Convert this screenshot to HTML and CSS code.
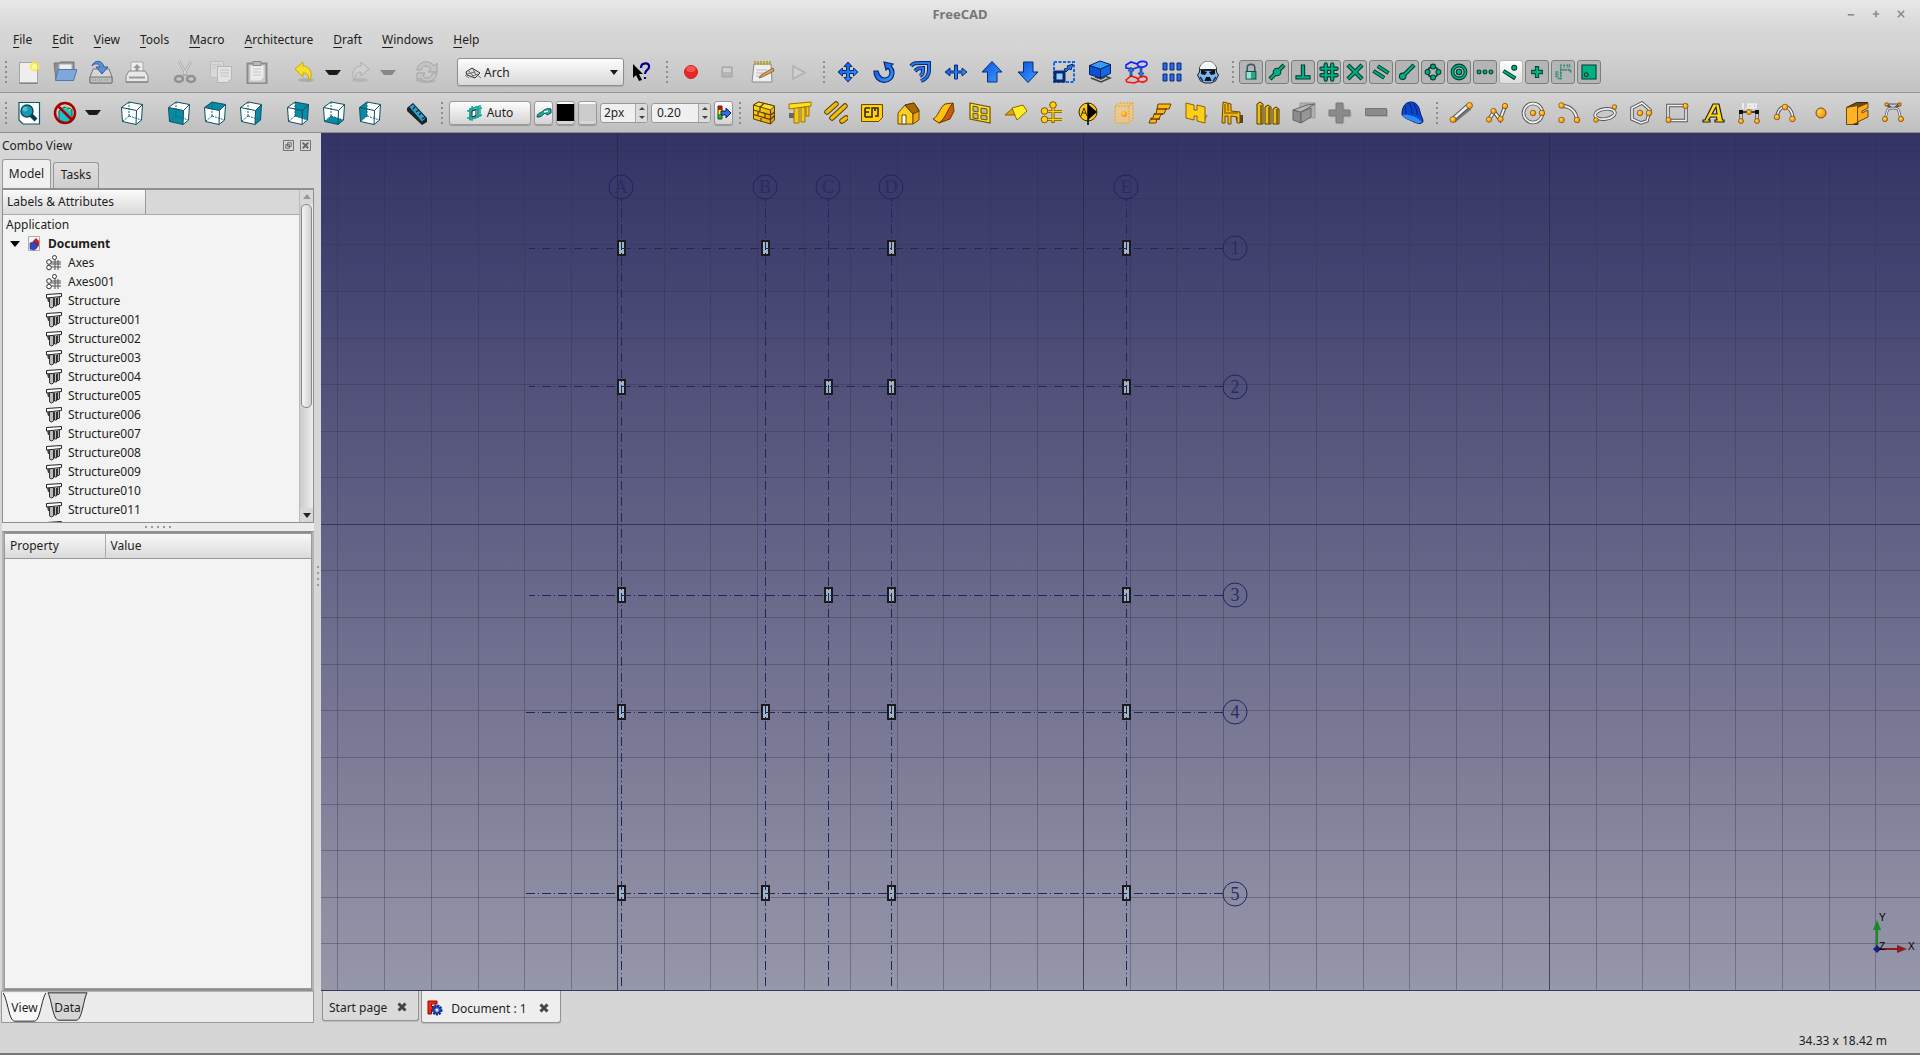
FILE: index.html
```html
<!DOCTYPE html>
<html lang="en">
<head>
<meta charset="utf-8">
<title>FreeCAD</title>
<link rel="stylesheet" href="styles.css">
</head>
<body>
<svg class="defs" aria-hidden="true">
  <defs>
    <linearGradient id="gBlue" x1="0" y1="0" x2="1" y2="1"><stop offset="0" stop-color="#0a50e0"/><stop offset="1" stop-color="#3aa0ff"/></linearGradient>
    <linearGradient id="gGold" x1="0" y1="0" x2="1" y2="1"><stop offset="0" stop-color="#ffe21c"/><stop offset="1" stop-color="#e89a08"/></linearGradient>
    <radialGradient id="gDot" cx=".35" cy=".35" r=".7"><stop offset="0" stop-color="#ffd75a"/><stop offset="1" stop-color="#f58a00"/></radialGradient>
    <linearGradient id="gSky" x1="0" y1="0" x2="0" y2="1"><stop offset="0" stop-color="#333366"/><stop offset="1" stop-color="#9797aa"/></linearGradient>
  </defs>

  <symbol id="new" viewBox="0 0 24 24"><path d="M2.500 2.500h18v20h-18z" fill="#eee" stroke="#a6a6a6"/><path d="M2 23.500h19" stroke="#888"/><circle cx="17.500" cy="6.500" r="5" fill="#f6ec3c" opacity=".75"/><circle cx="17.500" cy="6.500" r="2.500" fill="#fffa9a"/></symbol>
  <symbol id="open" viewBox="0 0 24 24"><path d="M1 3h5l1-1h14v8H6L3 20z" fill="#8f8f8f" stroke="#777"/><path d="M6 4h13v8H6z" fill="#eee" stroke="#aaa"/><path d="M5 9.500h19L20.500 20.500H2.500z" fill="#7ea7da" stroke="#4a78b4"/></symbol>
  <symbol id="save" viewBox="0 0 24 24"><path d="M4 9h16l3 8v6H1v-6z" fill="#d6d6d6" stroke="#777"/><path d="M1 17h22v6H1z" fill="#bdbdbd" stroke="#777"/><path d="M4 20h9M16 20h4" stroke="#888" stroke-dasharray="1 1"/><path d="M3 6C5 0 13-1 15 7h4l-6 7-6-7h4C10 3 6 3 3 6z" fill="#5b8fd0" stroke="#2f5f9f"/></symbol>
  <symbol id="print" viewBox="0 0 24 24"><path d="M6 2h12v10H6z" fill="#eee" stroke="#aaa"/><path d="M12 4l4 4h-2.500v4h-3V8H8z" fill="#999"/><path d="M4 11h16l3 5v6H1v-6z" fill="#e8e8e8" stroke="#888"/><path d="M4 17.500h16" stroke="#999" stroke-width="2"/><path d="M1 22h22" stroke="#777"/></symbol>
  <symbol id="cut" viewBox="0 0 24 24"><path d="M6 1l8 15M18 1l-8 15" stroke="#aaa" stroke-width="2.600" fill="none"/><path d="M6 1l7 13M18 1l-7 13" stroke="#ddd" fill="none"/><g fill="none" stroke="#909090" stroke-width="2.500"><ellipse cx="6" cy="19" rx="4" ry="3"/><ellipse cx="18" cy="19" rx="4" ry="3"/></g></symbol>
  <symbol id="copy" viewBox="0 0 24 24"><path d="M1.500 1.500h13v16h-13z" fill="#d8d8d8" stroke="#bdbdbd"/><path d="M8.500 6.500h14v12l-4 4h-10z" fill="#e2e2e2" stroke="#b5b5b5"/><path d="M3 5h9M3 8h4M11 10h9M11 13h9M11 16h9" stroke="#c2c2c2"/></symbol>
  <symbol id="paste" viewBox="0 0 24 24"><path d="M2.500 3.500h19v20h-19z" fill="#c9c9c9" stroke="#8c8c8c" stroke-width="2"/><path d="M5.500 5.500h13v12l-3 3h-10z" fill="#ebebeb"/><path d="M8 1.500h8v4H8z" fill="#bbb" stroke="#888"/><path d="M8 9h8M8 12h8M8 15h8" stroke="#c6c6c6"/></symbol>
  <symbol id="undo" viewBox="0 0 24 24"><ellipse cx="13" cy="20" rx="8" ry="2" fill="#888" opacity=".4"/><path d="M2 9l8-7v4c7 0 11 8 6 15 0-6-2-8-6-8v4z" fill="#f3df2c" stroke="#c9a800"/></symbol>
  <symbol id="redo" viewBox="0 0 24 24"><ellipse cx="12" cy="20" rx="8" ry="2" fill="#999" opacity=".35"/><path d="M21 9l-8-7v4C6 6 2 14 7 20c0-6 2-8 6-8v4z" fill="#cfcfcf" stroke="#adadad"/></symbol>
  <symbol id="refresh" viewBox="0 0 24 24"><ellipse cx="12" cy="21" rx="9" ry="2" fill="#999" opacity=".4"/><path d="M2 10c1-9 12-11 17-4l3-3v9h-9l3-3C12 4 7 6 6 10zM22 13c-1 9-12 11-17 5l-3 3v-8h8l-2 3c3 4 8 2 10-3z" fill="#c4c4c4" stroke="#a3a3a3"/></symbol>
  <symbol id="help" viewBox="0 0 24 24"><path d="M3 4v14l3-3 3 6 3-1-3-6h4z" fill="#000"/><path d="M11 8c0-6 9-6 8-1 0 3-4 3-4 7M15 17v2" fill="none" stroke="#00008b" stroke-width="2.200"/></symbol>
  <symbol id="rec" viewBox="0 0 24 24"><circle cx="12" cy="12" r="6.500" fill="#ea2525" stroke="#c22"/><ellipse cx="12" cy="9" rx="4.500" ry="3" fill="#ff7a7a" opacity=".6"/></symbol>
  <symbol id="stop" viewBox="0 0 24 24"><path d="M7 7h10v10H7z" fill="#b5b5b5" stroke="#a0a0a0"/><path d="M8 8h8v4H8z" fill="#d0d0d0"/></symbol>
  <symbol id="note" viewBox="0 0 24 24"><path d="M3 4h17l1 18H1z" fill="#eee" stroke="#888"/><path d="M3 3h17" stroke="#b5a642" stroke-width="4" stroke-dasharray="2 1"/><path d="M5 10h11M5 13h8M5 16h6" stroke="#bbb"/><path d="M22 8l1 3-12 6-3 1 2-3z" fill="#e0a040" stroke="#865"/></symbol>
  <symbol id="play" viewBox="0 0 24 24"><path d="M6 6v13l12-6.500z" fill="#d0d0d0" stroke="#b0b0b0" stroke-width="1.500"/></symbol>
  <symbol id="move" viewBox="0 0 24 24"><path d="M12 2l4 4.500h-2.500v4h4V8l4.500 4-4.500 4v-2.500h-4v4H16L12 22l-4-4.500h2.500v-4h-4V16L2 12l4.500-4v2.500h4v-4H8z" fill="url(#gBlue)" stroke="#0a2a70"/></symbol>
  <symbol id="rotate" viewBox="0 0 24 24"><path d="M2 11c0 15 20 15 20 1 0-3-1-4-3-6l2-2-9-2 2 8 2-2c3 3 3 9-3 10-4 0-6-3-7-7z" fill="url(#gBlue)" stroke="#0a2a70" stroke-width="1.200"/></symbol>
  <symbol id="offset" viewBox="0 0 24 24"><path d="M3 6C6 2 9 3 21 3v7c0 5-3 9-8 11M7 11c3-3 4-3 8-3v3c0 3-1 4-3 5" fill="none" stroke="#0a2a70" stroke-width="4"/><path d="M3 6C6 2 9 3 21 3v7c0 5-3 9-8 11M7 11c3-3 4-3 8-3v3c0 3-1 4-3 5" fill="none" stroke="#2a78ea" stroke-width="2"/></symbol>
  <symbol id="trim" viewBox="0 0 24 24"><path d="M1 12l5-4v3h4.500V5h3v6H18V8l5 4-5 4v-3h-4.500v6h-3v-6H6v3z" fill="url(#gBlue)" stroke="#0a2a70"/></symbol>
  <symbol id="up" viewBox="0 0 24 24"><path d="M12 1.500L22 12h-5v10H7.500V12H2z" fill="url(#gBlue)" stroke="#0a2a70"/></symbol>
  <symbol id="down" viewBox="0 0 24 24"><path d="M12 22.500L22 12h-5V2H7.500v10H2z" fill="url(#gBlue)" stroke="#0a2a70"/></symbol>
  <symbol id="scale" viewBox="0 0 24 24"><path d="M2 2h20v20H2z" fill="none" stroke="#1466e8" stroke-width="2" stroke-dasharray="3 1.500"/><path d="M3 12h9v9H3z" fill="#9cf" stroke="#0a2a70" stroke-width="3"/><path d="M12 9l4-1-1-2 6-2-2 6-2-1-3 3z" fill="#2a78ea" stroke="#0a2a70"/></symbol>
  <symbol id="draw" viewBox="0 0 24 24"><path d="M3 18l10 4 9-4-5-2M7 17l6 2 4-2" fill="none" stroke="#444" stroke-width="1.600"/><path d="M1.500 5.500v9l11 3.500v-9z" fill="#0a50d8" stroke="#06245c"/><path d="M12.500 9L22.500 4.500v9l-10 4.500z" fill="#1468e0" stroke="#06245c"/><path d="M1.500 5.500L12 1l10.500 3.500L12.500 9z" fill="#3a98ff" stroke="#06245c"/></symbol>
  <symbol id="shape2d" viewBox="0 0 24 24"><g fill="none" stroke-width="1.600"><path d="M2 5l5-3 6 2 2 3-6 2-7-1zM13 4c3-4 10-3 10 0s-6 4-8 2" stroke="#1020ff"/><path d="M2 20l5-4 6 2 2 3-5 2-7-1zM14 19c3-4 9-3 9 0s-6 4-8 2" stroke="#ff1010"/></g><path d="M7 7l3 4H8v5H6v-5H4zM17 17l-3-4h2V8h2v5h2z" fill="#2a78ea" stroke="#0a2a70" stroke-width=".6"/></symbol>
  <symbol id="array" viewBox="0 0 24 24"><g fill="#2a68e8" stroke="#0a2a70"><path d="M3 3h4v7H3zM10 3h4v7h-4zM17 3h4v7h-4zM3 14h4v7H3zM10 14h4v7h-4zM17 14h4v7h-4z"/></g></symbol>
  <symbol id="clone" viewBox="0 0 24 24"><path d="M3.500 12C2-2 22-2 20.500 12l2 3-3 6-4.500 2H9l-4.500-2-3-6z" fill="#7ab4f4" stroke="#222"/><path d="M4 9C4-1 20-1 20 9l-8 1z" fill="#f6f8fb"/><path d="M4 9h16l-1 2H5z" fill="#222"/><path d="M5 10l6 2-2 3-4-1zM19 10l-6 2 2 3 4-1zM10 17h4l1.500 4h-7z" fill="#111"/><path d="M4 17l3 4M20 17l-3 4" stroke="#234" stroke-width="1.500"/></symbol>

  <symbol id="lock" viewBox="0 0 24 24"><path d="M8.500 11V8c0-4 7-4 7 0v3" fill="none" stroke="#456" stroke-width="1.500"/><path d="M7.500 11.500h9v7h-9z" fill="#28a890" stroke="#115048"/><path d="M8 12h4v6H8z" fill="#9be0cc"/></symbol>
  <symbol id="s-mid" viewBox="0 0 24 24"><path d="M5.500 18.500l13-13" stroke="#003c30" stroke-width="4"/><circle cx="12" cy="12" r="3.500" fill="#00b184" stroke="#003c30"/><path d="M6 18L18 6" stroke="#00b184" stroke-width="2"/></symbol>
  <symbol id="s-perp" viewBox="0 0 24 24"><path d="M10.500 5.500h3v10h5v3h-13v-3h5z" fill="#00b184" stroke="#003c30"/></symbol>
  <symbol id="s-grid" viewBox="0 0 24 24"><path d="M9 5v14M15 5v14M5 9h14M5 15h14" stroke="#003c30" stroke-width="4" stroke-linecap="round"/><path d="M9 5v14M15 5v14M5 9h14M5 15h14" stroke="#00b184" stroke-width="2" stroke-linecap="round"/></symbol>
  <symbol id="s-int" viewBox="0 0 24 24"><path d="M5.500 5.500l13 13M18.500 5.500l-13 13" stroke="#003c30" stroke-width="4"/><path d="M6 6l12 12M18 6L6 18" stroke="#00b184" stroke-width="2"/></symbol>
  <symbol id="s-par" viewBox="0 0 24 24"><path d="M5 11l10 6.500M9 6.500L19 13" stroke="#003c30" stroke-width="3.600"/><path d="M5.500 11.300l9 5.900M9.500 6.800l9 5.900" stroke="#00b184" stroke-width="1.800"/></symbol>
  <symbol id="s-end" viewBox="0 0 24 24"><path d="M8 16L18.500 5.500" stroke="#003c30" stroke-width="4"/><circle cx="8" cy="16" r="3" fill="#00b184" stroke="#003c30"/><path d="M8 16L18 6" stroke="#00b184" stroke-width="2"/></symbol>
  <symbol id="s-ang" viewBox="0 0 24 24"><circle cx="12" cy="12" r="5" fill="none" stroke="#003c30" stroke-width="1.500"/><g fill="#00b184" stroke="#003c30"><circle cx="12" cy="7" r="2.300"/><circle cx="12" cy="17" r="2.300"/><circle cx="7" cy="12" r="2.300"/><circle cx="17" cy="12" r="2.300"/></g></symbol>
  <symbol id="s-cen" viewBox="0 0 24 24"><circle cx="12" cy="12" r="6" fill="none" stroke="#003c30" stroke-width="3.500"/><circle cx="12" cy="12" r="6" fill="none" stroke="#00b184" stroke-width="1.600"/><circle cx="12" cy="12" r="2.500" fill="#00b184" stroke="#003c30"/></symbol>
  <symbol id="s-ext" viewBox="0 0 24 24"><g fill="#00b184" stroke="#003c30"><circle cx="6.500" cy="12" r="1.800"/><circle cx="12" cy="12" r="1.800"/><circle cx="17.500" cy="12" r="1.800"/></g></symbol>
  <symbol id="s-near" viewBox="0 0 24 24"><path d="M5 11l11 7" stroke="#003c30" stroke-width="3.600"/><path d="M5.500 11.500l10 6" stroke="#00b184" stroke-width="1.800"/><circle cx="15" cy="8" r="2.300" fill="#00b184" stroke="#003c30"/></symbol>
  <symbol id="s-ort" viewBox="0 0 24 24"><path d="M10.500 7h3v3.500H17v3h-3.500V17h-3v-3.500H7v-3h3.500z" fill="#00b184" stroke="#004c3c"/></symbol>
  <symbol id="s-dim" viewBox="0 0 24 24"><path d="M10 19v-9h9v3M10 5v4M13 5v3M16 5v3M18 5v3M5 12h3M5 14h3M5 16h3M7 18h3" fill="none" stroke="#2c8a72" stroke-width="1.600" stroke-dasharray="2 .6"/></symbol>
  <symbol id="s-wp" viewBox="0 0 24 24"><path d="M5.500 5.500h13v13h-13z" fill="#00b184" stroke="#003c30"/><circle cx="9.500" cy="14.500" r="1.800" fill="none" stroke="#003c30"/></symbol>

  <symbol id="fit" viewBox="0 0 24 24"><path d="M2 1.500h20.500V23H6l-4-4z" fill="#fff" stroke="#0b5a6a" stroke-width="1.200"/><path d="M13 13l6 6" stroke="#0b3a4a" stroke-width="4"/><circle cx="10" cy="10" r="6" fill="#1a98b0" stroke="#0b4a5a" stroke-width="1.500"/><circle cx="8" cy="8" r="2.500" fill="#7ad4e4" opacity=".6"/></symbol>
  <symbol id="nodraw" viewBox="0 0 24 24"><path d="M6 10l5-4 8 2v10l-5 4-8-3z" fill="#20c0c8" stroke="#0b5a6a"/><path d="M12 8l7-6M15 10l7-5" stroke="#e8d820"/><circle cx="12" cy="12" r="10" fill="none" stroke="#a80000" stroke-width="2.500"/><path d="M5 5l14 14" stroke="#a80000" stroke-width="2.500"/></symbol>
  <symbol id="cube" viewBox="0 0 24 24"><path d="M1.500 6.500L9 1l13.500 2.500-1 15.500L16 23.500 2.500 20.500z" fill="#fff"/></symbol>
  <symbol id="wire" viewBox="0 0 24 24"><path d="M9 1v14M9 15l12.500 4M9 15l-6.500 5.500" fill="none" stroke="#0b6a7c" stroke-dasharray="2 1"/><path d="M1.500 6.500L9 1l13.500 2.500-1 15.500L16 23.500 2.500 20.500zM1.500 6.500l15 3 6-6M16.500 9.500L16 23.500" fill="none" stroke="#0b5060"/></symbol>
  <symbol id="c-front" viewBox="0 0 24 24"><path d="M1.500 6.500l15 3L16 23.500 2.500 20.500z" fill="#0a8aa4"/></symbol>
  <symbol id="c-top" viewBox="0 0 24 24"><path d="M1.500 6.500L9 1l13.500 2.500-6 6z" fill="#0a8aa4"/></symbol>
  <symbol id="c-right" viewBox="0 0 24 24"><path d="M16.500 9.500l6-6-1 15.500-5.500 4.500z" fill="#0a8aa4"/></symbol>
  <symbol id="c-rear" viewBox="0 0 24 24"><path d="M9 1l13.500 2.500-1 15.500L9 15z" fill="#0a8aa4"/></symbol>
  <symbol id="c-bottom" viewBox="0 0 24 24"><path d="M2.500 20.500L9 15l12.500 4-5.500 4.500z" fill="#0a8aa4"/></symbol>
  <symbol id="c-left" viewBox="0 0 24 24"><path d="M1.500 6.500L9 1v14l-6.500 5.500z" fill="#0a8aa4"/></symbol>
  <symbol id="measure" viewBox="0 0 24 24"><path d="M2 7l6-5 14 15v4l-5 3L2 10z" fill="#222"/><path d="M4 6l4-3 13 14-4 4z" fill="#2f9fcc" stroke="#0b3a4a"/><path d="M8 8l2-2M11 11l3-2M14 14l2-2M17 18l3-2" stroke="#06303c" stroke-width="1.300"/></symbol>
  <symbol id="plane" viewBox="0 0 16 16"><path d="M3 4l8-2.500V12l-8 2.500z" fill="#fff" stroke="#055" stroke-width="1.200"/><path d="M3 4l8-2.500V12l-8 2.500zM0 6l15-3M0 13l15-3M5 1v15M13 0v12" stroke="#18a8a0" fill="none" stroke-width="1.500"/><path d="M5 6l4-1.500v6L5 12z" fill="#fff" stroke="#022"/></symbol>
  <symbol id="constr" viewBox="0 0 16 16"><path d="M1 12c0-4 4-4 6-6s5-3 8-2v4l-4 2c-1 0-1-2-2-2s-3 4-6 4z" fill="#28a890" stroke="#055"/><path d="M8 7l4-1" stroke="#dff" stroke-width="1.500"/></symbol>
  <symbol id="apply" viewBox="0 0 16 16"><path d="M2 1h4v4H2z" fill="#f00"/><path d="M2 5h4v4H2z" fill="#ff0"/><path d="M2 9h4v5H2z" fill="#0c3"/><path d="M2 1h4v13H2z" fill="none" stroke="#333"/><path d="M5 6h5V3l5 5-5 5v-3H5z" fill="#2a70e8" stroke="#124"/></symbol>

  <symbol id="wall" viewBox="0 0 24 24"><path d="M1.500 4l5-3 16 4v14l-4 4-17-5z" fill="url(#gGold)" stroke="#5a3e00"/><path d="M1.500 4l17 5 4-4-16-4z" fill="#ffe030" stroke="#5a3e00"/><path d="M18.500 9v14M1.500 9l17 5 4-3M1.500 13.500l17 5 4-4M8 6v5M13 12v5M6 10v5M9 15.500v5M12 2.500L8 6" fill="none" stroke="#5a3e00" stroke-width="1.200"/></symbol>
  <symbol id="struct" viewBox="0 0 24 24"><path d="M1 12h6v5H1z" fill="#666"/><path d="M6 6h5v16H6zM13 6h4v15h-4zM18 5h3v10h-3z" fill="#f6c812" stroke="#9a7400"/><path d="M1 3l22-2v4L1 8z" fill="#ffe020" stroke="#9a7400"/></symbol>
  <symbol id="rebar" viewBox="0 0 24 24"><g stroke="#5a3e00" stroke-width="5.500" stroke-linecap="round"><path d="M3 11L12 3M8 17L21 5M18 20l4-3"/></g><g stroke="#eebc10" stroke-width="3.500" stroke-linecap="round"><path d="M3 11L12 3M8 17L21 5M18 20l4-3"/></g></symbol>
  <symbol id="floor" viewBox="0 0 24 24"><path d="M1.500 3.500h21v13l-4 4h-17z" fill="#ffcf10" stroke="#6a4a00"/><path d="M5 7h5M5 16h7V7h6v8h-3M5 7v9M5 11h4M15 7v3" fill="none" stroke="#3a2a00" stroke-width="1.600"/></symbol>
  <symbol id="house" viewBox="0 0 24 24"><path d="M2 12l7-8 8 9v10H2z" fill="#ffcf20" stroke="#6a4a00"/><path d="M9 4l9-2 5 7v10l-6 4V13z" fill="#f0a810" stroke="#6a4a00"/><path d="M9 4l9-2 5 8-6 3z" fill="#a86a08" stroke="#5a3e00"/><path d="M6 14h4v9H6z" fill="#fff" stroke="#6a4a00"/></symbol>
  <symbol id="roofA" viewBox="0 0 24 24"><path d="M1 18c5-2 7-12 12-15l8-1c-4 4-6 12-10 17l-4 3z" fill="#ffc010" stroke="#6a3a00"/><path d="M21 2l1 8-4 8-11 4c7-5 9-15 14-20z" fill="#c85a08" stroke="#6a3a00"/></symbol>
  <symbol id="window" viewBox="0 0 24 24"><path d="M2 2l20 4v16L2 18z" fill="#ffe030" stroke="#6a5200" stroke-width="1.200"/><path d="M5 5l5 1v5l-5-1zM13 7l6 1v5l-6-1zM5 12l5 1v5l-5-1zM13 14l6 1v4l-6-1z" fill="#b9b9a0" stroke="#6a5200"/></symbol>
  <symbol id="roof" viewBox="0 0 24 24"><path d="M1 14L9 7l5 2-3 5z" fill="#e0a010" stroke="#8a6200"/><path d="M8 7l11-3 4 6-10 9z" fill="#ffee28" stroke="#8a6a00"/></symbol>
  <symbol id="axis" viewBox="0 0 24 24"><path d="M13 5v17M8 10.500h14M8 18.500h14" stroke="#7a5600" stroke-width="3"/><g fill="#ffd010" stroke="#7a5600"><circle cx="13" cy="4" r="3.300"/><circle cx="4.500" cy="10" r="3.300"/><circle cx="4.500" cy="18.500" r="3.300"/></g><path d="M13 7v14M8 10.500h14M8 18.500h14" stroke="#ffd010" stroke-width="1.400"/></symbol>
  <symbol id="section" viewBox="0 0 24 24"><circle cx="12" cy="11" r="9" fill="#ffc810" stroke="#3a2a00"/><path d="M12 2v22" stroke="#000" stroke-width="1.500"/><path d="M12 3l9 8-9 8z" fill="#000"/><path d="M5 15l3-8 3 8M6 12h4" stroke="#3a2a00" fill="none"/></symbol>
  <symbol id="space" viewBox="0 0 24 24"><path d="M3 5l4-3h14v16l-4 4H3z" fill="#f6c878" fill-opacity=".65" stroke="#f0a020" stroke-dasharray="2 1"/><path d="M3 5h14v17M17 5l4-3" fill="none" stroke="#f0a020" stroke-dasharray="2 1"/><circle cx="12" cy="13" r="3" fill="url(#gDot)"/></symbol>
  <symbol id="stairs" viewBox="0 0 24 24"><path d="M10 3h13l-2 5h-3l-2 5h-3l-2 5H9l-1 4H1l2-5h2l1-4h2l1-5z" fill="#ffb810" stroke="#6a4000"/><path d="M9 8h10M6 13h9M3 18h9" stroke="#6a4000" stroke-width="1.500"/></symbol>
  <symbol id="panel" viewBox="0 0 24 24"><path d="M18 14h6l-4 7h-3z" fill="#777" opacity=".7"/><path d="M2 2l8 2v5h3V4l8 2v16l-8-2v-5h-3v4l-8-2z" fill="#ffcf18" stroke="#8a6200"/></symbol>
  <symbol id="chair" viewBox="0 0 24 24"><path d="M15 14h8v8h-6z" fill="#444"/><path d="M3 1l8 2v7l9 1v11h-3v-6l-6-1v8H8v-8H5v7H2z" fill="#f4b810" stroke="#6a4a00"/><path d="M5 3v8M8 3v7M4 12h14" stroke="#6a4a00"/></symbol>
  <symbol id="fence" viewBox="0 0 24 24"><g fill="#f0c010" stroke="#4a3600"><path d="M1 3l3-2 3 2v20H1zM9 6l3-2 3 2v17H9zM17 8l3-2 3 2v15h-6z"/></g><path d="M5 4v19M13 6v17M21 8v15" stroke="#8a6a00" stroke-width="2"/></symbol>
  <symbol id="gbox" viewBox="0 0 24 24"><path d="M8 2h15v15H8z" fill="#b0b0b0" stroke="#999"/><path d="M1 9l8 2v11l-8-3z" fill="#8c8c8c" stroke="#666"/><path d="M1 9l14-5 8-1-14 8z" fill="#b8b8b8" stroke="#666"/><path d="M9 11l10-4v9L9 22z" fill="#969696" stroke="#666"/></symbol>
  <symbol id="plus" viewBox="0 0 24 24"><path d="M10 4h7v7h7v6h-7v7h-7v-7H3v-6h7z" fill="#bbb" opacity=".8"/><path d="M8 2h7v7h7v6h-7v7H8v-7H1V9h7z" fill="#8b8b8b" stroke="#777"/></symbol>
  <symbol id="minus" viewBox="0 0 24 24"><path d="M3 9h21v7H3z" fill="#aaa"/><path d="M1.500 7.500h21v7h-21z" fill="#8b8b8b" stroke="#777"/></symbol>
  <symbol id="helmet" viewBox="0 0 24 24"><path d="M2 13C2 5 6 1 11 1s8 4 9 10c1 4 3 7 3 9 0 3-5 3-9 1S1 16 2 13z" fill="#0a46d0" stroke="#061e5c"/><path d="M2 14c6-1 15 1 20 7-2 2-6 1-10-1s-9-3-10-6z" fill="#2f8af4"/><path d="M5 5c1 3 1 5 1 8M9 2c2 3 3 7 3 11M14 3c2 3 3 7 3 11" stroke="#05206c" fill="none"/></symbol>

  <symbol id="line" viewBox="0 0 24 24"><path d="M5 20L21 7" stroke="#777" stroke-width="4"/><path d="M4 18L20 4" stroke="#555" stroke-width="4.500"/><path d="M4 18L20 4" stroke="#f2f2f2" stroke-width="2.500"/><circle cx="4" cy="18.500" r="3" fill="url(#gDot)" stroke="#7a4400" stroke-width=".7"/><circle cx="20.500" cy="4.500" r="3" fill="url(#gDot)" stroke="#7a4400" stroke-width=".7"/></symbol>
  <symbol id="poly" viewBox="0 0 24 24"><path d="M4 18.500l5-8 6 8 5-13" stroke="#555" stroke-width="4" fill="none"/><path d="M4 18.500l5-8 6 8 5-13" stroke="#f2f2f2" stroke-width="2" fill="none"/><g fill="url(#gDot)" stroke="#7a4400" stroke-width=".7"><circle cx="4" cy="18.500" r="2.700"/><circle cx="8.500" cy="10" r="2.700"/><circle cx="15.500" cy="18" r="2.700"/><circle cx="20" cy="5" r="2.700"/></g></symbol>
  <symbol id="circle" viewBox="0 0 24 24"><circle cx="12" cy="12" r="9.500" fill="none" stroke="#555" stroke-width="3.500"/><circle cx="12" cy="12" r="9.500" fill="none" stroke="#f2f2f2" stroke-width="1.800"/><g fill="url(#gDot)" stroke="#7a4400" stroke-width=".7"><circle cx="12" cy="12" r="2.800"/><circle cx="21" cy="12" r="2.800"/></g></symbol>
  <symbol id="arc" viewBox="0 0 24 24"><path d="M5 5c8 0 14 5 15 14" stroke="#555" stroke-width="4" fill="none"/><path d="M5 5c8 0 14 5 15 14" stroke="#f2f2f2" stroke-width="2" fill="none"/><g fill="url(#gDot)" stroke="#7a4400" stroke-width=".7"><circle cx="4.500" cy="4.500" r="2.800"/><circle cx="20" cy="19" r="2.800"/><circle cx="4.500" cy="19" r="2.800"/></g></symbol>
  <symbol id="ellipse" viewBox="0 0 24 24"><g fill="none"><ellipse cx="12" cy="13" rx="10" ry="5" stroke="#555" stroke-width="3.500" transform="rotate(-8 12 13)"/><ellipse cx="12" cy="13" rx="10" ry="5" stroke="#f2f2f2" stroke-width="1.800" transform="rotate(-8 12 13)"/></g><g fill="url(#gDot)" stroke="#7a4400" stroke-width=".7"><circle cx="3" cy="19" r="2.300"/><circle cx="21.500" cy="6" r="2.300"/></g></symbol>
  <symbol id="pent" viewBox="0 0 24 24"><path d="M3 7l10-5 8 7-3 11-6 2-9-4z" stroke="#555" stroke-width="3.500" fill="none"/><path d="M3 7l10-5 8 7-3 11-6 2-9-4z" stroke="#f2f2f2" stroke-width="1.600" fill="none"/><g fill="url(#gDot)" stroke="#7a4400" stroke-width=".7"><circle cx="11" cy="12" r="2.800"/><circle cx="20" cy="12" r="2.800"/></g></symbol>
  <symbol id="rect" viewBox="0 0 24 24"><path d="M3 4.500h18v15H3z" stroke="#555" stroke-width="3.500" fill="none"/><path d="M3 4.500h18v15H3z" stroke="#f2f2f2" stroke-width="1.600" fill="none"/><g fill="url(#gDot)" stroke="#7a4400" stroke-width=".7"><circle cx="3.500" cy="19" r="2.600"/><circle cx="20.500" cy="5" r="2.600"/></g></symbol>
  <symbol id="textA" viewBox="0 0 24 24"><path d="M2 21h7v-2H7.500l2-3h6l.5 3h-2v2h9v-2h-1.500L18 3h-6L4 19H2zM11 13l4-7 1 7z" fill="#ffd818" stroke="#222" stroke-width="1.200" fill-rule="evenodd"/></symbol>
  <symbol id="dim" viewBox="0 0 24 24"><path d="M4 20V11M20 20V11" stroke="#555" stroke-width="3.500"/><path d="M4 20V11M20 20V11" stroke="#f2f2f2" stroke-width="1.500"/><path d="M4 11h16" stroke="#111" stroke-width="1.500"/><path d="M2 9h4v4H2zM18 9h4v4h-4z" fill="#111"/><path d="M6 2v6M9 7v1M11 3h3v4h-3zM16 3h3v4h-3z" fill="none" stroke="#fff" stroke-width="1.200"/><g fill="url(#gDot)" stroke="#7a4400" stroke-width=".7"><circle cx="4" cy="20" r="2.500"/><circle cx="20" cy="20" r="2.500"/><circle cx="12" cy="11" r="2.500"/></g></symbol>
  <symbol id="bspl" viewBox="0 0 24 24"><path d="M4 17C4 3 19 1 20 18" stroke="#555" stroke-width="3.500" fill="none"/><path d="M4 17C4 3 19 1 20 18" stroke="#f2f2f2" stroke-width="1.600" fill="none"/><g fill="url(#gDot)" stroke="#7a4400" stroke-width=".7"><circle cx="4" cy="16" r="2.800"/><circle cx="12" cy="6" r="2.800"/><circle cx="19.500" cy="18" r="2.800"/></g></symbol>
  <symbol id="point" viewBox="0 0 24 24"><circle cx="12" cy="12" r="5" fill="url(#gDot)" stroke="#8a4a00"/></symbol>
  <symbol id="facE" viewBox="0 0 24 24"><path d="M1.500 6.500l10-5h11.500l-10 5v17H1.500z" fill="#6a4a10" stroke="#3c2a08"/><path d="M1.500 6.500l11-2v17l-5 2h-6z" fill="#ffb428" stroke="#6a4a10"/><path d="M12.500 6.500L23 2v5l-6 3v2l6-3v7l-10.500 5z" fill="#ffa818" stroke="#6a4a10"/></symbol>
  <symbol id="bez" viewBox="0 0 24 24"><path d="M5 3h14" stroke="#555"/><path d="M4 18C7 9 5 7 12 7s5 2 8 11M5 3l6 5M19 3l-6 5" stroke="#555" stroke-width="2.600" fill="none"/><path d="M4 18C7 9 5 7 12 7s5 2 8 11" stroke="#f2f2f2" stroke-width="1.200" fill="none"/><g fill="url(#gDot)" stroke="#7a4400" stroke-width=".7"><circle cx="4" cy="18" r="2.600"/><circle cx="20" cy="18" r="2.600"/><path d="M4 2h3v3H4zM17 2h3v3h-3z"/></g></symbol>

  <symbol id="doc" viewBox="0 0 14 16"><path d="M1.500 .5h11v14h-11z" fill="#f4f4f4" stroke="#aaa"/><path d="M6 5l3-3 3 3v5l-4 2z" fill="#d02020"/><path d="M3 7l3-1 4 1v5l-3 2-4-1z" fill="#3048c0" stroke="#182878" stroke-width=".6"/></symbol>
  <symbol id="t-axes" viewBox="0 0 16 16"><path d="M9 4v11M12 5v10M5 7h10M5 12h10M5 9h10" stroke="#555"/><g fill="#fff" stroke="#333"><circle cx="8.500" cy="2.500" r="2"/><circle cx="3" cy="7" r="2.300"/><circle cx="3" cy="12.500" r="2.300"/></g></symbol>
  <symbol id="t-str" viewBox="0 0 16 16"><path d="M3.500 5v9l2 1 2-1V5M8.500 5v8h2V5M11.500 4.500V12l2-1V4" fill="#bbb" stroke="#333"/><path d="M.5 1.500l15-1v3l-15 1.500z" fill="#fff" stroke="#222"/><path d="M1 5h2v4H2z" fill="#444"/></symbol>
  <symbol id="fc" viewBox="0 0 16 16"><path d="M1 1h9v3H4.500v2.500H8v3H4.500V14H1z" fill="#f02c10" stroke="#900"/><circle cx="10" cy="10" r="4.500" fill="#5a8ae0" stroke="#0a2a8a" stroke-width="2" stroke-dasharray="2 1"/><circle cx="10" cy="10" r="3.300" fill="#3a6ad8" stroke="#0a2a8a"/><circle cx="10" cy="10" r="1.500" fill="#eee"/></symbol>
  <symbol id="x" viewBox="0 0 10 10"><path d="M1.500 1.500l7 7M8.500 1.500l-7 7" stroke="currentColor" stroke-width="3"/></symbol>
</svg>

<header class="chrome">
  <div class="titlebar">
    <h1>FreeCAD</h1>
    <div class="wm">
      <button aria-label="Minimize"><svg viewBox="0 0 10 10"><path d="M1 6h8"/></svg></button>
      <button aria-label="Maximize"><svg viewBox="0 0 10 10"><path d="M1 5h8M5 1v8"/></svg></button>
      <button aria-label="Close"><svg viewBox="0 0 10 10"><path d="M1 1l8 8M9 1L1 9"/></svg></button>
    </div>
  </div>
  <nav class="menubar">
    <button><u>F</u>ile</button><button><u>E</u>dit</button><button><u>V</u>iew</button><button><u>T</u>ools</button><button><u>M</u>acro</button><button><u>A</u>rchitecture</button><button><u>D</u>raft</button><button><u>W</u>indows</button><button><u>H</u>elp</button>
  </nav>
  <div class="toolbar">
    <i class="grip"></i>
    <button class="tb" aria-label="New"><svg><use href="#new"/></svg></button>
    <button class="tb" aria-label="Open"><svg><use href="#open"/></svg></button>
    <button class="tb" aria-label="Save"><svg><use href="#save"/></svg></button>
    <button class="tb" aria-label="Print"><svg><use href="#print"/></svg></button>
    <i class="sep"></i>
    <button class="tb" aria-label="Cut"><svg><use href="#cut"/></svg></button>
    <button class="tb" aria-label="Copy"><svg><use href="#copy"/></svg></button>
    <button class="tb" aria-label="Paste"><svg><use href="#paste"/></svg></button>
    <i class="sep"></i>
    <button class="tb" aria-label="Undo"><svg><use href="#undo"/></svg></button>
    <button class="drop" aria-label="Undo list"></button>
    <button class="tb" aria-label="Redo"><svg><use href="#redo"/></svg></button>
    <button class="drop off" aria-label="Redo list"></button>
    <i class="sep"></i>
    <button class="tb" aria-label="Refresh"><svg><use href="#refresh"/></svg></button>
    <i class="sep"></i>
    <div class="combo">
      <svg class="combo-icon" viewBox="0 0 16 16"><path d="M1 7l6-4 8 5-5 5-8-3z" fill="#ddd" stroke="#333"/><path d="M4 6l4 5M8 4l3 6M2 9l8-2M5 12l8-3M0 10l4 3M12 10l4 3" stroke="#555" stroke-width=".8"/></svg>
      <select aria-label="Workbench"><option>Arch</option></select>
    </div>
    <button class="tb" aria-label="What's This?"><svg><use href="#help"/></svg></button>
    <i class="grip"></i>
    <button class="tb" aria-label="Record macro"><svg><use href="#rec"/></svg></button>
    <button class="tb" aria-label="Stop macro"><svg><use href="#stop"/></svg></button>
    <button class="tb" aria-label="Macros"><svg><use href="#note"/></svg></button>
    <button class="tb" aria-label="Run macro"><svg><use href="#play"/></svg></button>
    <i class="grip"></i>
    <button class="tb" aria-label="Move"><svg><use href="#move"/></svg></button>
    <button class="tb" aria-label="Rotate"><svg><use href="#rotate"/></svg></button>
    <button class="tb" aria-label="Offset"><svg><use href="#offset"/></svg></button>
    <button class="tb" aria-label="Trimex"><svg><use href="#trim"/></svg></button>
    <button class="tb" aria-label="Upgrade"><svg><use href="#up"/></svg></button>
    <button class="tb" aria-label="Downgrade"><svg><use href="#down"/></svg></button>
    <button class="tb" aria-label="Scale"><svg><use href="#scale"/></svg></button>
    <button class="tb" aria-label="Drawing"><svg><use href="#draw"/></svg></button>
    <button class="tb" aria-label="Shape 2D view"><svg><use href="#shape2d"/></svg></button>
    <button class="tb" aria-label="Array"><svg><use href="#array"/></svg></button>
    <button class="tb" aria-label="Clone"><svg><use href="#clone"/></svg></button>
    <i class="grip"></i>
    <div class="snaps">
      <button aria-label="Snap lock"><svg><use href="#lock"/></svg></button>
      <button aria-label="Midpoint"><svg><use href="#s-mid"/></svg></button>
      <button aria-label="Perpendicular"><svg><use href="#s-perp"/></svg></button>
      <button aria-label="Grid"><svg><use href="#s-grid"/></svg></button>
      <button aria-label="Intersection"><svg><use href="#s-int"/></svg></button>
      <button aria-label="Parallel"><svg><use href="#s-par"/></svg></button>
      <button aria-label="Endpoint"><svg><use href="#s-end"/></svg></button>
      <button aria-label="Angle"><svg><use href="#s-ang"/></svg></button>
      <button aria-label="Center"><svg><use href="#s-cen"/></svg></button>
      <button aria-label="Extension"><svg><use href="#s-ext"/></svg></button>
      <button class="raised" aria-label="Near"><svg><use href="#s-near"/></svg></button>
      <button aria-label="Ortho"><svg><use href="#s-ort"/></svg></button>
      <button aria-label="Dimensions"><svg><use href="#s-dim"/></svg></button>
      <button aria-label="Working plane"><svg><use href="#s-wp"/></svg></button>
    </div>
  </div>
</header>
<div class="toolbar second">
  <i class="grip"></i>
  <button class="tb" aria-label="Fit all"><svg><use href="#fit"/></svg></button>
  <button class="tb" aria-label="Draw style"><svg><use href="#nodraw"/></svg></button>
  <button class="drop" aria-label="Draw style list"></button>
  <i class="sep"></i>
  <button class="tb" aria-label="Axonometric"><svg><use href="#cube"/><use href="#wire"/></svg></button>
  <i class="sep"></i>
  <button class="tb" aria-label="Front"><svg><use href="#cube"/><use href="#c-front"/><use href="#wire"/></svg></button>
  <button class="tb" aria-label="Top"><svg><use href="#cube"/><use href="#c-top"/><use href="#wire"/></svg></button>
  <button class="tb" aria-label="Right"><svg><use href="#cube"/><use href="#c-right"/><use href="#wire"/></svg></button>
  <i class="sep"></i>
  <button class="tb" aria-label="Rear"><svg><use href="#cube"/><use href="#c-rear"/><use href="#wire"/></svg></button>
  <button class="tb" aria-label="Bottom"><svg><use href="#cube"/><use href="#c-bottom"/><use href="#wire"/></svg></button>
  <button class="tb" aria-label="Left"><svg><use href="#cube"/><use href="#c-left"/><use href="#wire"/></svg></button>
  <i class="sep"></i>
  <button class="tb" aria-label="Measure"><svg><use href="#measure"/></svg></button>
  <i class="grip"></i>
  <div class="tray">
    <button class="push auto"><svg><use href="#plane"/></svg>Auto</button>
    <button class="push sq" aria-label="Construction mode"><svg><use href="#constr"/></svg></button>
    <button class="push sq" aria-label="Line color"><b class="swatch black"></b></button>
    <button class="push sq" aria-label="Face color"><b class="swatch"></b></button>
    <div class="spin small"><input type="text" value="2px" aria-label="Line width"><span><button aria-label="Up"></button><button class="dn" aria-label="Down"></button></span></div>
    <div class="spin"><input type="text" value="0.20" aria-label="Text size"><span><button aria-label="Up"></button><button class="dn" aria-label="Down"></button></span></div>
    <button class="push sq" aria-label="Apply style"><svg><use href="#apply"/></svg></button>
  </div>
  <i class="grip"></i>
  <button class="tb" aria-label="Wall"><svg><use href="#wall"/></svg></button>
  <button class="tb" aria-label="Structure"><svg><use href="#struct"/></svg></button>
  <button class="tb" aria-label="Rebar"><svg><use href="#rebar"/></svg></button>
  <button class="tb" aria-label="Floor"><svg><use href="#floor"/></svg></button>
  <button class="tb" aria-label="Building"><svg><use href="#house"/></svg></button>
  <button class="tb" aria-label="Site"><svg><use href="#roofA"/></svg></button>
  <button class="tb" aria-label="Window"><svg><use href="#window"/></svg></button>
  <button class="tb" aria-label="Roof"><svg><use href="#roof"/></svg></button>
  <button class="tb" aria-label="Axis"><svg><use href="#axis"/></svg></button>
  <button class="tb" aria-label="Section plane"><svg><use href="#section"/></svg></button>
  <button class="tb" aria-label="Space"><svg><use href="#space"/></svg></button>
  <button class="tb" aria-label="Stairs"><svg><use href="#stairs"/></svg></button>
  <button class="tb" aria-label="Panel"><svg><use href="#panel"/></svg></button>
  <button class="tb" aria-label="Equipment"><svg><use href="#chair"/></svg></button>
  <button class="tb" aria-label="Frame"><svg><use href="#fence"/></svg></button>
  <button class="tb" aria-label="Cut plane"><svg><use href="#gbox"/></svg></button>
  <button class="tb" aria-label="Add"><svg><use href="#plus"/></svg></button>
  <button class="tb" aria-label="Remove"><svg><use href="#minus"/></svg></button>
  <button class="tb" aria-label="Survey"><svg><use href="#helmet"/></svg></button>
  <i class="grip"></i>
  <button class="tb" aria-label="Line"><svg><use href="#line"/></svg></button>
  <button class="tb" aria-label="Wire"><svg><use href="#poly"/></svg></button>
  <button class="tb" aria-label="Circle"><svg><use href="#circle"/></svg></button>
  <button class="tb" aria-label="Arc"><svg><use href="#arc"/></svg></button>
  <button class="tb" aria-label="Ellipse"><svg><use href="#ellipse"/></svg></button>
  <button class="tb" aria-label="Polygon"><svg><use href="#pent"/></svg></button>
  <button class="tb" aria-label="Rectangle"><svg><use href="#rect"/></svg></button>
  <button class="tb" aria-label="Text"><svg><use href="#textA"/></svg></button>
  <button class="tb" aria-label="Dimension"><svg><use href="#dim"/></svg></button>
  <button class="tb" aria-label="B-spline"><svg><use href="#bspl"/></svg></button>
  <button class="tb" aria-label="Point"><svg><use href="#point"/></svg></button>
  <button class="tb" aria-label="Facebinder"><svg><use href="#facE"/></svg></button>
  <button class="tb" aria-label="Bezier"><svg><use href="#bez"/></svg></button>
</div>

<main class="work">
  <aside class="dock">
    <div class="dock-title"><span>Combo View</span>
      <button aria-label="Float"><svg viewBox="0 0 12 12"><path d="M.5.5h11v11H.5zM5 3h4v4H5zM3 5h4v4H3z"/></svg></button>
      <button aria-label="Close"><svg viewBox="0 0 12 12"><path d="M.5.5h11v11H.5z"/><path d="M3 3l6 6M9 3L3 9" stroke-width="2"/></svg></button>
    </div>
    <div class="tabs"><button class="on">Model</button><button>Tasks</button></div>
    <section class="tree">
      <div class="tree-main">
        <div class="tree-head">Labels &amp; Attributes</div>
        <ul>
          <li class="root">Application</li>
          <li class="document"><svg class="caret" viewBox="0 0 10 6"><path d="M0 0h10L5 6z"/></svg><svg class="docicon"><use href="#doc"/></svg>Document</li>
          <li><svg><use href="#t-axes"/></svg>Axes</li>
          <li><svg><use href="#t-axes"/></svg>Axes001</li>
          <li><svg><use href="#t-str"/></svg>Structure</li>
          <li><svg><use href="#t-str"/></svg>Structure001</li>
          <li><svg><use href="#t-str"/></svg>Structure002</li>
          <li><svg><use href="#t-str"/></svg>Structure003</li>
          <li><svg><use href="#t-str"/></svg>Structure004</li>
          <li><svg><use href="#t-str"/></svg>Structure005</li>
          <li><svg><use href="#t-str"/></svg>Structure006</li>
          <li><svg><use href="#t-str"/></svg>Structure007</li>
          <li><svg><use href="#t-str"/></svg>Structure008</li>
          <li><svg><use href="#t-str"/></svg>Structure009</li>
          <li><svg><use href="#t-str"/></svg>Structure010</li>
          <li><svg><use href="#t-str"/></svg>Structure011</li>
          <li><svg><use href="#t-str"/></svg></li>
        </ul>
      </div>
      <div class="scroll">
        <svg viewBox="0 0 14 14"><path d="M3 9h8L7 4z" fill="#999"/></svg>
        <div class="track"><div class="thumb"></div></div>
        <svg viewBox="0 0 14 14"><path d="M3 5h8l-4 5z" fill="#222"/></svg>
      </div>
    </section>
    <div class="hsplit"></div>
    <section class="props">
      <table><thead><tr><th class="pname">Property</th><th>Value</th></tr></thead></table>
    </section>
    <div class="views">
      <button class="vt on"><svg viewBox="0 0 44 30"><path d="M0 .5C5 8 6 29.500 12 29.500h20C38 29.500 39 8 44 .5"/></svg><span>View</span></button>
      <button class="vt"><svg viewBox="0 0 44 30"><path d="M2 .5C6 8 7 28.500 13 28.500h18C37 28.500 38 8 42 .5z"/></svg><span>Data</span></button>
    </div>
  </aside>
  <div class="vsplit"></div>
  <section class="stage">
    <div class="canvas">
      <svg class="scene" role="img" aria-label="Top view of the structural grid">
        <rect width="100%" height="100%" fill="url(#gSky)"/>
        <path class="grid" d="M16.500 0v2000M63.500 0v2000M110.500 0v2000M157.500 0v2000M203.500 0v2000M250.500 0v2000M343.500 0v2000M389.500 0v2000M436.500 0v2000M483.500 0v2000M529.500 0v2000M576.500 0v2000M622.500 0v2000M669.500 0v2000M716.500 0v2000M809.500 0v2000M855.500 0v2000M902.500 0v2000M948.500 0v2000M995.500 0v2000M1042.500 0v2000M1088.500 0v2000M1135.500 0v2000M1181.500 0v2000M1275.500 0v2000M1321.500 0v2000M1368.500 0v2000M1414.500 0v2000M1461.500 0v2000M1508.500 0v2000M1554.500 0v2000M0 18.500h4000M0 65.500h4000M0 111.500h4000M0 158.500h4000M0 205.500h4000M0 251.500h4000M0 298.500h4000M0 344.500h4000M0 437.500h4000M0 484.500h4000M0 531.500h4000M0 577.500h4000M0 624.500h4000M0 671.500h4000M0 717.500h4000M0 764.500h4000M0 810.500h4000"/>
        <path class="major" d="M296.500 0v2000M762.500 0v2000M1228.500 0v2000M0 391.500h4000"/>
        <g class="columns">
          <path d="M297 108h7v14h-7zM441 108h7v14h-7zM567 108h7v14h-7zM802 108h7v14h-7z"/>
          <path d="M297 247h7v14h-7zM504 247h7v14h-7zM567 247h7v14h-7zM802 247h7v14h-7z"/>
          <path d="M297 455h7v14h-7zM504 455h7v14h-7zM567 455h7v14h-7zM802 455h7v14h-7z"/>
          <path d="M297 572h7v14h-7zM441 572h7v14h-7zM567 572h7v14h-7zM802 572h7v14h-7z"/>
          <path d="M297 753h7v14h-7zM441 753h7v14h-7zM567 753h7v14h-7zM802 753h7v14h-7z"/>
        </g>
        <path class="axes" d="M300.500 853V66M444.500 853V66M507.500 853V66M570.500 853V66M805.500 853V66"/>
        <path class="axes" d="M902 115.500H208M902 253.500H208M902 462.500H208M902 579.500H205M902 760.500H205"/>
        <g class="bubbles">
          <circle cx="300" cy="54" r="12"/><circle cx="444" cy="54" r="12"/><circle cx="507" cy="54" r="12"/><circle cx="570" cy="54" r="12"/><circle cx="805" cy="54" r="12"/>
          <circle cx="914" cy="115" r="12"/><circle cx="914" cy="254" r="12"/><circle cx="914" cy="462" r="12"/><circle cx="914" cy="579" r="12"/><circle cx="914" cy="761" r="12"/>
        </g>
        <g class="marks">
          <text x="300" y="60">A</text><text x="444" y="60">B</text><text x="507" y="60">C</text><text x="570" y="60">D</text><text x="805" y="60">E</text>
          <text x="914" y="121">1</text><text x="914" y="260">2</text><text x="914" y="468">3</text><text x="914" y="585">4</text><text x="914" y="767">5</text>
        </g>
      </svg>
      <svg class="triad" viewBox="0 0 50 60">
        <path d="M7 38V16" stroke="#1c8a24" stroke-width="2"/><path d="M7 9l4 10H3z" fill="#1c8a24"/>
        <path d="M7 38h20" stroke="#8a1c1c" stroke-width="2"/><path d="M37 38l-10-4v8z" fill="#8a1c1c"/>
        <path d="M7 34l4 4-4 4-4-4z" fill="#1c1c8a"/>
        <text x="9" y="10">Y</text><text x="38" y="39">X</text><text x="9" y="39">Z</text>
      </svg>
    </div>
    <div class="doctabs">
      <div class="dt"><button class="name">Start page</button><button class="close" aria-label="Close tab"><svg><use href="#x"/></svg></button></div>
      <div class="dt on"><svg class="fc"><use href="#fc"/></svg><button class="name">Document : 1</button><button class="close" aria-label="Close tab"><svg><use href="#x"/></svg></button></div>
    </div>
  </section>
</main>
<footer class="status">34.33 x 18.42 m</footer>
</body>
</html>
```

FILE: styles.css
```css
* { box-sizing: border-box; }
html, body { margin: 0; height: 100%; }
body {
  display: flex; flex-direction: column; overflow: hidden;
  background: #d6d6d6; color: #1e1e1e;
  font: 12px/19px "Noto Sans", "Open Sans", sans-serif;
}
button, input, select { font: inherit; color: inherit; margin: 0; padding: 0; border: 0; background: none; }
svg { display: block; }
.defs { width: 0; height: 0; position: absolute; }

.chrome { background: linear-gradient(#e8e8e8, #d7d7d7 28px, #d4d4d4 48px, #c2c2c2); border-bottom: 1px solid #939393; }
.titlebar { display: grid; grid-template-columns: 1fr auto 1fr; align-items: center; height: 28px; }
.titlebar h1 { grid-column: 2; margin: 0; font-size: 13px; color: #777; }
.wm { display: flex; gap: 11px; justify-content: flex-end; padding-right: 12px; }
.wm button { width: 14px; height: 14px; padding: 3px; }
.wm svg { stroke: #8a8a8a; stroke-width: 2; fill: none; }
.menubar { display: flex; height: 24px; padding: 0 0 2px 3px; }
.menubar button { padding: 0 10px; }
.menubar u { text-underline-offset: 3px; text-decoration-thickness: 1px; }

.toolbar { display: flex; align-items: center; height: 40px; }
.second { background: linear-gradient(#d4d4d4, #bfbfbf); border-bottom: 1px solid #8e8e8e; }
.toolbar > * { flex: none; }
.tb { width: 36px; height: 36px; display: grid; place-items: center; }
.tb svg { width: 24px; height: 24px; }
.sep { width: 12px; }
.second .sep { width: 11px; }
.grip { width: 13px; height: 24px; background: repeating-linear-gradient(#8c8c8c 0 2px, transparent 2px 5px) 6px 1px / 2px 22px no-repeat; }
.grip:first-child { width: 11px; background-position: 5px 1px; }
.drop { width: 19px; height: 36px; }
.second .drop { width: 20px; }
.drop::before { content: ""; display: block; margin: 0 auto; width: 8px; border: 4px solid transparent; border-top: 5px solid #1a1a1a; border-bottom: 0; }
.drop.off::before { border-top-color: #888; }
.combo { position: relative; width: 167px; height: 28px; border: 1px solid #8f8f8f; border-radius: 3px; background: linear-gradient(#fdfdfd, #d8d8d8); box-shadow: 0 1px 1px #aaa; }
.combo select { appearance: none; width: 100%; height: 100%; padding-left: 26px; }
.combo-icon { position: absolute; left: 7px; top: 6px; width: 16px; height: 16px; }
.combo::after { content: ""; position: absolute; right: 5px; top: 11px; border: 4px solid transparent; border-top: 5px solid #1a1a1a; border-bottom: 0; }
.snaps { display: flex; gap: 2px; }
.snaps button { width: 24px; height: 24px; border: 1px solid #7d7d7d; border-radius: 3px; background: #b5b5b5; display: grid; place-items: center; }
.snaps .raised { background: linear-gradient(#fff, #ddd); border-color: #b5b5b5; }
.snaps svg { width: 26px; height: 26px; margin: -2px; }

.tray { display: flex; gap: 3px; align-items: center; width: 285px; padding-left: 1px; }
.tray > * { flex: none; }
.push { height: 24px; border: 1px solid #9a9a9a; border-radius: 3px; background: linear-gradient(#fdfdfd, #d4d4d4); box-shadow: 0 1px 1px #999; display: flex; align-items: center; justify-content: center; gap: 4px; }
.push svg { width: 16px; height: 16px; flex: none; }
.auto { width: 82px; }
.sq { width: 19px; }
.swatch { width: 17px; height: 17px; background: #cbcbcb; flex: none; }
.swatch.black { background: #000; }
.spin { display: flex; width: 60px; height: 20px; border: 1px solid #999; border-radius: 3px; background: #f0f0f0; overflow: hidden; }
.spin.small { width: 48px; }
.spin input { flex: 1; min-width: 0; padding-left: 5px; }
.small input { padding-left: 3px; }
.spin span { width: 12px; display: flex; flex-direction: column; justify-content: space-around; align-items: center; background: #dcdcdc; border-left: 1px solid #aaa; }
.spin span button { border: 3px solid transparent; border-top: 0; border-bottom: 3px solid #444; }
.spin span .dn { border-bottom: 0; border-top: 3px solid #444; }

.work { flex: 1; min-height: 0; display: flex; }
.dock { width: 314px; flex: none; display: flex; flex-direction: column; }
.dock-title { height: 25px; display: flex; align-items: center; padding-left: 2px; }
.dock-title span { flex: 1; }
.dock-title button { width: 17px; padding: 0 3px; }
.dock-title svg { width: 11px; height: 11px; fill: none; stroke: #666; }
.tabs { height: 30px; display: flex; align-items: flex-end; gap: 2px; padding-left: 2px; }
.tabs button { width: 46px; height: 26px; padding-bottom: 2px; border: 1px solid #999; border-bottom: 0; border-radius: 3px 3px 0 0; background: linear-gradient(#ddd, #cfcfcf); }
.tabs .on { width: 49px; height: 29px; background: #f0f0f0; }
.tree { flex: 335 1 0; min-height: 0; display: flex; margin-left: 2px; border: 1px solid #8f8f8f; border-top-width: 2px; background: #f3f3f3; overflow: hidden; }
.tree-main { flex: 1; min-width: 0; }
.tree-head { height: 25px; line-height: 24px; background: linear-gradient(90deg, transparent 142px, #999 142px 143px, #d8d8d8 143px), linear-gradient(#fafafa, #dadada); border-bottom: 1px solid #aaa; padding-left: 4px; }
.tree ul { list-style: none; margin: 0; padding: 0; }
.tree li { height: 19px; display: flex; align-items: center; gap: 6px; padding-left: 43px; white-space: nowrap; }
.tree li svg { width: 16px; height: 16px; flex: none; }
.tree .root { padding-left: 3px; }
.tree .document { padding-left: 7px; gap: 7px; font-weight: bold; }
.tree .caret { width: 10px; height: 6px; }
.tree .docicon { width: 14px; height: 16px; }
.scroll { width: 14px; display: flex; flex-direction: column; background: #d8d8d8; border-left: 1px solid #bbb; }
.scroll svg { width: 14px; height: 14px; }
.track { flex: 1; background: linear-gradient(90deg, #ccc, #eee); }
.thumb { width: 11px; height: 67%; margin: 0 auto; border: 1px solid #888; border-radius: 5px; background: linear-gradient(90deg, #f5f5f5, #d0d0d0); }
.hsplit { height: 8px; margin-left: 2px; background: repeating-linear-gradient(90deg, #999 0 2px, transparent 2px 6px) center / 26px 2px no-repeat #ececec; }
.props { flex: 460 1 0; min-height: 0; border: 3px solid #b4b4b4; border-top: 2px solid #8f8f8f; border-bottom: 2px solid #8f8f8f; margin-left: 2px; background: #f3f3f3; outline: 1px solid #999; outline-offset: -3px; }
.props table { width: 100%; border-collapse: collapse; background: linear-gradient(#fafafa, #dadada); }
.props th { height: 25px; padding: 0 0 0 5px; font-weight: normal; text-align: left; border-bottom: 1px solid #999; }
.props .pname { width: 100px; border-right: 1px solid #aaa; }
.views { height: 32px; margin-left: 1px; display: flex; padding-left: 1px; border: 1px solid #999; border-top-color: #b5b5b5; background: #ececec; }
.vt { display: grid; width: 43px; height: 30px; }
.vt > * { grid-area: 1 / 1; }
.vt svg { width: 43px; height: 30px; fill: #d6d6d6; stroke: #222; }
.vt.on svg { fill: #f8f8f8; }
.vt span { align-self: center; }
.vsplit { width: 7px; background: repeating-linear-gradient(#999 0 2px, transparent 2px 6px) center / 2px 24px no-repeat; }
.stage { flex: 1; min-width: 0; display: flex; flex-direction: column; }
.canvas { flex: 1; min-height: 0; position: relative; border-bottom: 1px solid #333a5c; overflow: hidden; }
.scene { width: 100%; height: 100%; }
.grid { stroke: #323246; stroke-opacity: .36; fill: none; }
.major { stroke: #2a2a40; stroke-opacity: .75; fill: none; }
.columns { fill: #a0b4c8; stroke: #1a1a1a; stroke-width: 2; }
.axes { stroke: #23235f; stroke-dasharray: 9 3 1 3; fill: none; }
.bubbles { fill: none; stroke: #23235f; }
.marks { fill: #282c66; font: 18px "Liberation Serif", serif; text-anchor: middle; }
.triad { position: absolute; right: 0; bottom: 19px; width: 50px; height: 60px; font: 10px "Liberation Sans", sans-serif; }
.doctabs { height: 32px; display: flex; align-items: flex-start; gap: 2px; padding-left: 1px; }
.dt { height: 30px; display: flex; align-items: center; gap: 10px; padding: 3px 11px 0 6px; border: 1px solid #939393; border-top: 0; border-radius: 0 0 3px 3px; background: #dadada; box-shadow: 0 1px 1px #bbb; }
.dt.on { height: 32px; background: #eee; gap: 12px; padding: 3px 11px 0 5px; }
.dt .fc { width: 16px; height: 16px; margin-right: -4px; }
.close { color: #444; }
.close svg { width: 10px; height: 10px; }
.status { height: 32px; display: flex; align-items: center; justify-content: flex-end; padding: 4px 33px 0 0; border-bottom: 2px solid #777; }
```
